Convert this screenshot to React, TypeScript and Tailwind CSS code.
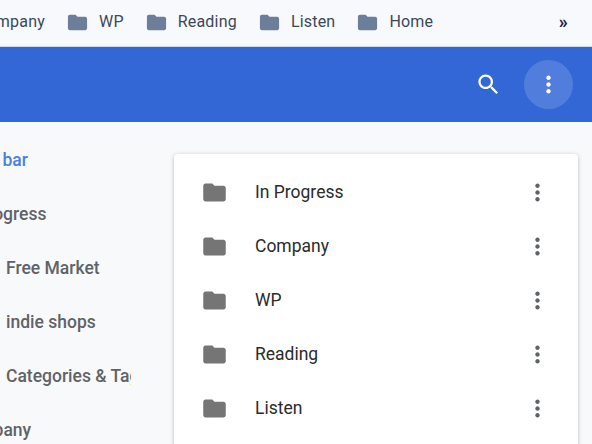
const FolderIcon = ({ className }: { className: string }) => (
  <svg viewBox="0 0 24 24" className={className} fill="currentColor">
    <path d="M10 4H4c-1.1 0-1.99.9-1.99 2L2 18c0 1.1.9 2 2 2h16c1.1 0 2-.9 2-2V8c0-1.1-.9-2-2-2h-8l-2-2z" />
  </svg>
);

const MoreIcon = ({ className }: { className: string }) => (
  <svg viewBox="0 0 24 24" className={className} fill="currentColor">
    <path d="M12 8c1.1 0 2-.9 2-2s-.9-2-2-2-2 .9-2 2 .9 2 2 2zm0 2c-1.1 0-2 .9-2 2s.9 2 2 2 2-.9 2-2-.9-2-2-2zm0 6c-1.1 0-2 .9-2 2s.9 2 2 2 2-.9 2-2-.9-2-2-2z" />
  </svg>
);

const SearchIcon = ({ className }: { className: string }) => (
  <svg viewBox="0 0 24 24" className={className} fill="currentColor">
    <path d="M15.5 14h-.79l-.28-.27C15.41 12.59 16 11.11 16 9.5 16 5.91 13.09 3 9.5 3S3 5.91 3 9.5 5.91 16 9.5 16c1.61 0 3.09-.59 4.23-1.57l.27.28v.79l5 4.99L20.49 19l-4.99-5zm-6 0C7.01 14 5 11.99 5 9.5S7.01 5 9.5 5 14 7.01 14 9.5 11.99 14 9.5 14z" />
  </svg>
);

const bookmarks = ["WP", "Reading", "Listen", "Home"];
const cardRows = ["In Progress", "Company", "WP", "Reading", "Listen"];

export default function App() {
  return (
    <div className="h-[444px] w-[592px] overflow-hidden bg-[#f8f9fb] font-['Roboto',sans-serif]">
      {/* Bookmarks bar */}
      <div className="flex h-[47px] items-center border-b border-[#c9d6ec] bg-[#f7f9fd] pb-[2px] text-[16px] tracking-[0.2px] text-[#3c4858]">
        <div className="flex w-[66px] shrink-0 justify-end overflow-hidden">
          <span className="-ml-8 pr-[21px] whitespace-nowrap">Company</span>
        </div>
        <div className="flex items-center gap-[21px]">
          {bookmarks.map((name) => (
            <div key={name} className="flex items-center gap-[10px]">
              <FolderIcon className="h-[23px] w-[23px] text-[#6b7f9b]" />
              <span>{name}</span>
            </div>
          ))}
        </div>
        <span className="mr-[24px] mb-[2px] ml-auto text-[18px] font-bold text-[#1a2040]">»</span>
      </div>

      {/* App header */}
      <div className="flex h-[75px] items-center justify-end gap-[22px] bg-[#3367d6] pr-[19px]">
        <SearchIcon className="h-[27px] w-[27px] text-white" />
        <div className="flex h-[49px] w-[49px] items-center justify-center rounded-full bg-white/15">
          <MoreIcon className="h-[27px] w-[27px] text-white" />
        </div>
      </div>

      <div className="flex">
        {/* Sidebar */}
        <div className="w-[131px] shrink-0 overflow-hidden pt-[11px] text-[17.5px] leading-[54px] font-medium whitespace-nowrap text-[#5f6368]">
          <div className="-ml-[91px] text-[#4a80e0]">Bookmarks bar</div>
          <div className="-ml-[43px]">In Progress</div>
          <div className="ml-[6px]">Free Market</div>
          <div className="ml-[6px]">indie shops</div>
          <div className="ml-[6px]">Categories & Tags</div>
          <div className="-ml-[43px]">Company</div>
        </div>

        {/* Folder list */}
        <div className="mt-[32px] ml-[43px] w-[404px] rounded-[4px] bg-white py-[11px] shadow-[0_1px_4px_rgba(0,0,0,0.25)]">
          {cardRows.map((name) => (
            <div key={name} className="flex h-[54px] items-center px-[27px]">
              <FolderIcon className="h-[27px] w-[27px] text-[#757575]" />
              <span className="ml-[27px] text-[17.5px] text-[#2b2b2b]">{name}</span>
              <MoreIcon className="ml-auto h-[27px] w-[27px] text-[#5f6368]" />
            </div>
          ))}
        </div>
      </div>
    </div>
  );
}
